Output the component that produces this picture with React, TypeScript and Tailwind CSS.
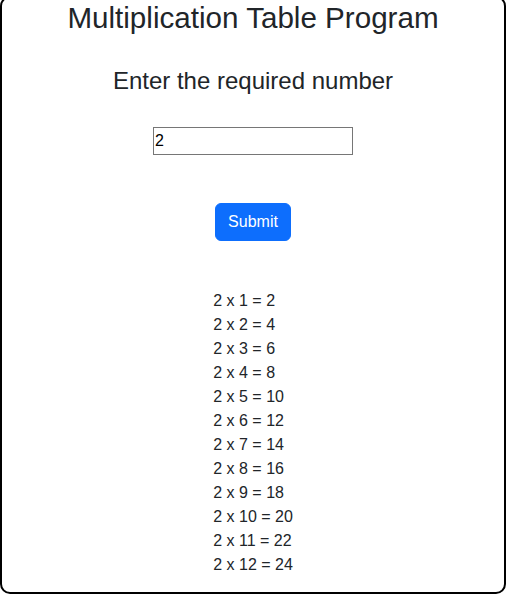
import { useState } from 'react';

const App = () => {
  const [value, setValue] = useState('2');
  const [num, setNum] = useState(2);

  const rows = Array.from({ length: 12 }, (_, i) => i + 1);

  const handleSubmit = (e: React.FormEvent<HTMLFormElement>) => {
    e.preventDefault();
    const n = Number(value);
    if (!Number.isNaN(n)) setNum(n);
  };

  return (
    <div className="font-['Liberation_Sans',Arial,sans-serif] text-[#212529] bg-white">
      <div className="-mt-[4px] w-[506px] h-[598px] border-2 border-black rounded-[10px] flex flex-col items-center text-center">
        <h1 className="mt-[2px] text-[29.6px] leading-[1.2] font-normal">
          Multiplication Table Program
        </h1>
        <h3 className="mt-[31px] text-[24px] leading-[1.2] font-normal">
          Enter the required number
        </h3>
        <form onSubmit={handleSubmit} className="flex flex-col items-center">
          <input
            type="text"
            value={value}
            onChange={(e) => setValue(e.target.value)}
            className="mt-[31.6px] w-[200px] h-[28px] border border-[#767676] px-[1px] text-[16px] text-black outline-none"
          />
          <button
            type="submit"
            className="mt-[48px] h-[38px] px-[12px] rounded-[6px] bg-[#0d6efd] text-white text-[16px] leading-[1.5] border border-[#0d6efd]"
          >
            Submit
          </button>
        </form>
        <div className="mt-[48px] text-left text-[16px] leading-[24px]">
          {rows.map((i) => (
            <div key={i}>
              {num} x {i} = {num * i}
            </div>
          ))}
        </div>
      </div>
    </div>
  );
};

export default App;
